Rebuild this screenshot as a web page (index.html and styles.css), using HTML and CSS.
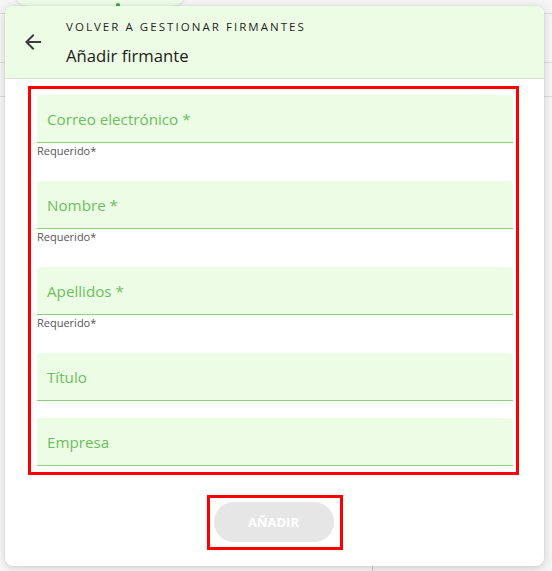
FILE: index.html
```html
<!DOCTYPE html>
<html lang="es">
<head>
<meta charset="utf-8">
<title>Añadir firmante</title>
<link rel="stylesheet" href="styles.css">
</head>
<body>
<div class="page">
  <div class="page-pill"><span class="pill-dot"></span></div>
  <div class="page-row r1"></div>
  <div class="page-row r2"></div>
  <div class="page-row r3"></div>
  <div class="page-foot"><div class="foot-left"></div><div class="foot-right"></div></div>
</div>

<div class="modal">
  <header class="modal-header">
    <button class="back" aria-label="Volver">
      <svg viewBox="0 0 24 24" width="24" height="24"><path d="M20 11H7.83l5.59-5.59L12 4l-8 8 8 8 1.41-1.41L7.83 13H20v-2z" fill="#3d3d3d"/></svg>
    </button>
    <div class="titles">
      <div class="overline">VOLVER A GESTIONAR FIRMANTES</div>
      <div class="title">Añadir firmante</div>
    </div>
  </header>

  <div class="body">
    <form class="form-box">
      <div class="field with-help">
        <div class="input"><span class="label">Correo electrónico *</span></div>
        <div class="help">Requerido*</div>
      </div>
      <div class="field with-help">
        <div class="input"><span class="label">Nombre *</span></div>
        <div class="help">Requerido*</div>
      </div>
      <div class="field with-help">
        <div class="input"><span class="label">Apellidos *</span></div>
        <div class="help">Requerido*</div>
      </div>
      <div class="field">
        <div class="input"><span class="label">Título</span></div>
      </div>
      <div class="field last">
        <div class="input"><span class="label">Empresa</span></div>
      </div>
    </form>

    <div class="actions">
      <div class="btn-box">
        <button class="add" type="button" disabled>AÑADIR</button>
      </div>
    </div>
  </div>
</div>
</body>
</html>
```

FILE: styles.css
```css
* { box-sizing: border-box; }

html, body {
  margin: 0;
  padding: 0;
}

body {
  width: 552px;
  height: 571px;
  overflow: hidden;
  background: #f4f4f4;
  font-family: "Open Sans", "Noto Sans", sans-serif;
  position: relative;
}

/* page behind the dialog */
.page {
  height: 571px;
  display: flex;
  flex-direction: column;
}
.page-pill {
  margin: -20px 0 0 15px;
  width: 170px;
  height: 26px;
  border-radius: 13px;
  background: #edfce6;
  box-shadow: 0 1px 3px rgba(0,0,0,0.12);
  position: relative;
  flex: none;
}
.pill-dot {
  position: absolute;
  left: 101px;
  bottom: 0;
  width: 4px;
  height: 3px;
  border-radius: 2px 2px 0 0;
  background: #3daa3a;
}
.page-row {
  flex: none;
  border-bottom: 1px solid #dcdcdc;
}
.r1 { height: 8px; }
.r2 { height: 49px; }
.r3 { height: 34px; }
.page-foot {
  flex: 1;
  display: flex;
}
.foot-left { width: 373px; border-right: 1px solid #c8c8c8; background: #f7f7f7; }
.foot-right { flex: 1; background: #f4f4f4; }

/* dialog */
.modal {
  position: absolute;
  left: 5px;
  top: 6px;
  width: 539px;
  height: 560px;
  background: #ffffff;
  border-radius: 8px;
  box-shadow: 0 2px 8px rgba(0,0,0,0.16), 0 0 2px rgba(0,0,0,0.08);
  overflow: hidden;
  display: flex;
  flex-direction: column;
}

.modal-header {
  height: 73px;
  background: #edfde5;
  border-bottom: 1px solid #d6e3cf;
  display: flex;
  align-items: flex-start;
  padding-left: 16px;
  flex: none;
}
.back {
  width: 24px;
  height: 24px;
  margin-top: 24px;
  padding: 0;
  border: 0;
  background: none;
  display: flex;
}
.titles {
  margin-left: 21px;
  padding-top: 13px;
}
.overline {
  font-size: 11.5px;
  letter-spacing: 2.05px;
  line-height: 16px;
  color: #1f1f1f;
}
.title {
  font-size: 16.7px;
  line-height: 22px;
  margin-top: 10px;
  color: #1c1c1c;
}

.body {
  padding: 7px 0 0 23px;
  display: flex;
  flex-direction: column;
}

.form-box {
  margin: 0;
  width: 491px;
  border: 3px solid #ff0000;
  padding: 6px 3px 6px 6px;
  display: flex;
  flex-direction: column;
}

.field { margin-bottom: 17px; }
.field.last { margin-bottom: 0; }
.input {
  height: 48px;
  background: #edfde5;
  border-radius: 4px 4px 0 0;
  border-bottom: 1px solid #8fcd7f;
  display: flex;
  align-items: center;
  padding: 1px 10px 0;
}
.label {
  font-size: 15.2px;
  color: #6bbf5e;
}
.help {
  height: 21px;
  font-size: 11px;
  line-height: 14px;
  padding-top: 1px;
  color: #555555;
}

.actions {
  display: flex;
  justify-content: center;
  margin: 20px 0 0 -23px;
  width: 539px;
}
.btn-box {
  border: 3px solid #ff0000;
  padding: 4px 6px 5px 4px;
}
.add {
  display: block;
  width: 120px;
  height: 40px;
  border: 0;
  border-radius: 20px;
  background: #e6e6e6;
  color: #ffffff;
  font-family: "Open Sans", "Noto Sans", sans-serif;
  font-weight: 700;
  font-size: 13px;
  padding: 0;
}
```
